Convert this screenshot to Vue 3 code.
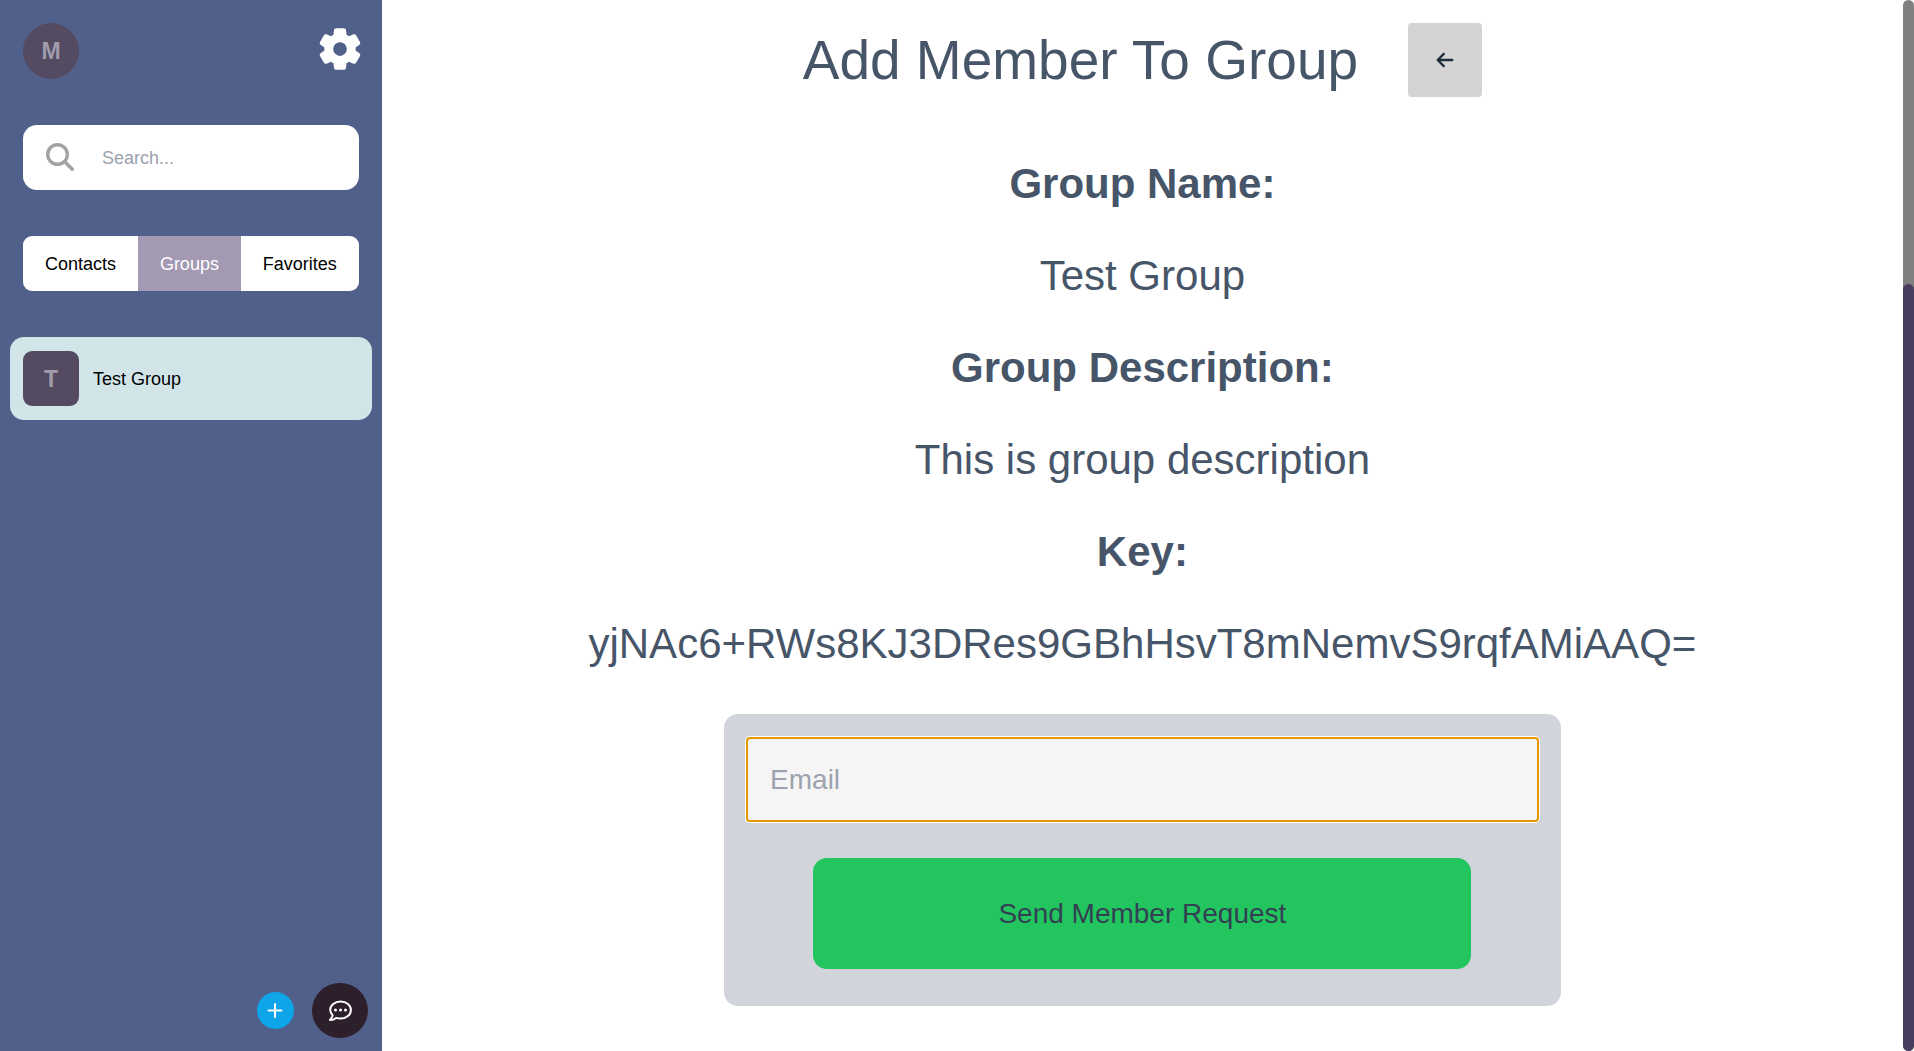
<script setup>
import { ref } from 'vue'

const search = ref('')
const email = ref('')
const activeTab = ref('Groups')
const tabs = ['Contacts', 'Groups', 'Favorites']
const groups = ['Test Group']
const details = [
  { label: 'Group Name:', value: 'Test Group' },
  { label: 'Group Description:', value: 'This is group description' },
  { label: 'Key:', value: 'yjNAc6+RWs8KJ3DRes9GBhHsvT8mNemvS9rqfAMiAAQ=' },
]
const thumbShare = 73
</script>

<template>
  <div class="app">
    <aside class="sidebar">
      <header class="top">
        <div class="avatar round">M</div>
        <button class="plain" type="button" aria-label="Settings">
          <svg width="50" height="52" viewBox="0 0 24 24" fill="#fff">
            <path fill-rule="evenodd" d="M19.5 12c0-.23-.01-.45-.03-.68l1.86-1.41c.4-.3.51-.86.26-1.3l-1.87-3.23c-.25-.44-.79-.62-1.25-.42l-2.15.91c-.37-.26-.76-.49-1.17-.68l-.29-2.31c-.06-.5-.49-.88-.99-.88h-3.73c-.51 0-.94.38-1 .88l-.29 2.31c-.41.19-.8.42-1.17.68l-2.15-.91c-.46-.2-1-.02-1.25.42L2.41 8.62c-.25.44-.14.99.26 1.3l1.86 1.41C4.51 11.55 4.5 11.77 4.5 12s.01.45.03.68l-1.86 1.41c-.4.3-.51.86-.26 1.3l1.87 3.23c.25.44.79.62 1.25.42l2.15-.91c.37.26.76.49 1.17.68l.29 2.31c.06.5.49.88.99.88h3.73c.5 0 .93-.38.99-.88l.29-2.31c.41-.19.8-.42 1.17-.68l2.15.91c.46.2 1 .02 1.25-.42l1.87-3.23c.25-.44.14-.99-.26-1.3l-1.86-1.41c.03-.23.04-.45.04-.68zM12 15.3a3.3 3.3 0 1 1 0-6.6 3.3 3.3 0 0 1 0 6.6z" />
          </svg>
        </button>
      </header>

      <label class="search">
        <svg width="28" height="30" viewBox="0 0 28 30" fill="none" stroke="#a3a3a3">
          <circle cx="11.5" cy="11.5" r="9.8" stroke-width="3.4" />
          <path d="M18.6 18.6l7.6 7.6" stroke-width="3.6" stroke-linecap="round" />
        </svg>
        <input v-model="search" type="text" placeholder="Search..." aria-label="Search" />
      </label>

      <nav class="tabs">
        <button
          v-for="tab in tabs"
          :key="tab"
          type="button"
          :class="{ active: tab === activeTab }"
          @click="activeTab = tab"
        >{{ tab }}</button>
      </nav>

      <ul class="groups">
        <li v-for="group in groups" :key="group">
          <button class="group" type="button">
            <span class="avatar square">{{ group[0] }}</span>
            <span>{{ group }}</span>
          </button>
        </li>
      </ul>

      <footer class="actions">
        <button class="add" type="button" aria-label="Add">
          <svg width="16" height="16" viewBox="0 0 16 16" fill="none" stroke="#fff" stroke-width="2" stroke-linecap="round">
            <path d="M8 1v13M1.5 7.5h13" />
          </svg>
        </button>
        <button class="chat" type="button" aria-label="Messages">
          <svg width="24" height="22" viewBox="0 0 24 22" fill="none" stroke="#fff" stroke-width="2" stroke-linejoin="round">
            <path d="M12.6 1.6C6.800 1.600 2.200 5.200 2.200 9.800c0 2.100.9 4 2.400 5.500-.3 1.700-1.300 3.200-2.600 4.700 2.300.1 4.400-.7 6-2.100 1.400.5 2.900.7 4.600.7 5.800 0 10.300-3.900 10.300-8.700s-4.500-8.300-10.300-8.300z" />
            <g fill="#fff" stroke="none">
              <circle cx="7.500" cy="10" r="1.500" />
              <circle cx="12.500" cy="10" r="1.500" />
              <circle cx="17.500" cy="10" r="1.500" />
            </g>
          </svg>
        </button>
      </footer>
    </aside>

    <main class="content">
      <div class="heading">
        <h1>Add Member To Group</h1>
        <button class="back" type="button" aria-label="Back">
          <svg width="18" height="16" viewBox="0 0 18 16" fill="none" stroke="#1e293b" stroke-width="2.3" stroke-linecap="round" stroke-linejoin="round">
            <path d="M16.300 8H1.700M7.800 1.900L1.700 8l6.100 6.100" />
          </svg>
        </button>
      </div>

      <dl class="details">
        <template v-for="item in details" :key="item.label">
          <dt>{{ item.label }}</dt>
          <dd>{{ item.value }}</dd>
        </template>
      </dl>

      <form class="card" @submit.prevent>
        <input v-model="email" type="email" placeholder="Email" aria-label="Email" />
        <button type="submit">Send Member Request</button>
      </form>
    </main>

    <div class="track" aria-hidden="true">
      <div class="thumb" :style="{ height: thumbShare + '%' }"></div>
    </div>
  </div>
</template>

<style>
body {
  margin: 0;
  background: #fff;
}
</style>

<style scoped>
* {
  box-sizing: border-box;
}

.app {
  display: flex;
  min-height: 100vh;
  font-family: "Liberation Sans", Arial, sans-serif;
  font-size: 18px;
  line-height: 28px;
  color: #475569;
}

button,
input {
  font: inherit;
  border: 0;
  margin: 0;
  padding: 0;
}

button {
  cursor: pointer;
}

svg {
  display: block;
}

.sidebar {
  width: calc(20% - 1px);
  flex: none;
  display: flex;
  flex-direction: column;
  background: #51608a;
}

.top {
  display: flex;
  justify-content: space-between;
  align-items: flex-start;
  padding: 23px 17px 0 23px;
}

.plain {
  background: none;
}

.avatar {
  display: flex;
  align-items: center;
  justify-content: center;
  width: 56px;
  background: #544b62;
  color: #a19bab;
  font-size: 23px;
  font-weight: 700;
}

.round {
  height: 56px;
  border-radius: 50%;
}

.square {
  height: 55px;
  border-radius: 9px;
}

.search {
  display: flex;
  align-items: center;
  gap: 28px;
  height: 65px;
  margin: 46px 23px 0;
  padding: 0 23px;
  border-radius: 14px;
  background: #fff;
}

.search svg {
  flex: none;
}

.search input {
  flex: 1;
  min-width: 0;
  background: none;
  outline: none;
}

input::placeholder {
  color: #9ca3af;
  opacity: 1;
}

.tabs {
  display: flex;
  height: 55px;
  margin: 46px 23px 0;
  border-radius: 9px;
  overflow: hidden;
}

.tabs button {
  flex: auto;
  background: #fff;
  color: #000;
}

.tabs .active {
  background: #a399b2;
  color: #fff;
}

.groups {
  list-style: none;
  margin: 46px 10px 0;
  padding: 0;
}

.group {
  display: flex;
  align-items: center;
  gap: 14px;
  width: 100%;
  padding: 14px 13px;
  border-radius: 14px;
  background: #d1e5e8;
  color: #000;
}

.actions {
  display: flex;
  justify-content: flex-end;
  align-items: center;
  gap: 18px;
  margin-top: auto;
  padding: 0 14px 13px;
}

.actions button {
  display: flex;
  align-items: center;
  justify-content: center;
  border-radius: 50%;
}

.add {
  width: 37px;
  height: 37px;
  background: #0ea5e9;
}

.chat {
  width: 56px;
  height: 55px;
  background: #2d1f2c;
}

.content {
  flex: 1;
  min-width: 0;
  display: flex;
  flex-direction: column;
  align-items: center;
  padding: 23px 0;
}

.heading {
  display: flex;
  align-items: center;
  gap: 50px;
}

h1 {
  margin: 0;
  font-size: 55px;
  line-height: 56px;
  font-weight: 400;
}

.back {
  display: flex;
  align-items: center;
  justify-content: center;
  width: 74px;
  height: 74px;
  border-radius: 4px;
  background: #d4d4d4;
}

.details {
  display: flex;
  flex-direction: column;
  gap: 46px;
  margin: 64px 0 47px;
  font-size: 42px;
  line-height: 46px;
  text-align: center;
}

dt {
  font-weight: 700;
}

dd {
  margin: 0;
}

.card {
  display: flex;
  flex-direction: column;
  align-items: center;
  gap: 36px;
  width: 55%;
  padding: 23px 22px 37px;
  border-radius: 14px;
  background: #d1d5db;
  font-size: 28px;
}

.card input {
  width: 100%;
  height: 85px;
  padding: 0 22px;
  border: 2px solid #e59700;
  border-radius: 4px;
  background: #f5f5f5;
  box-shadow: 0 0 0 1px #fff;
  outline: none;
}

.card button {
  width: 83%;
  height: 111px;
  border-radius: 14px;
  background: #22c55e;
  color: #334155;
}

.track {
  display: flex;
  align-items: flex-end;
  flex: none;
  width: 11px;
  border-radius: 6px;
  background: #808080;
}

.thumb {
  width: 100%;
  border-radius: 6px;
  background: #483d5e;
}
</style>
